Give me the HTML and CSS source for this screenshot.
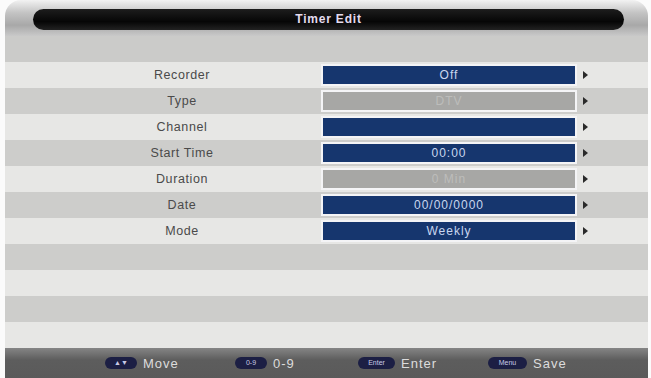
FILE: index.html
```html
<!DOCTYPE html>
<html>
<head>
<meta charset="utf-8">
<link rel="stylesheet" href="styles.css">
</head>
<body>
<div class="screen">
  <div class="topbar"><div class="pill-title">Timer Edit</div></div>
  <div class="stripe head"></div>
  <div class="row light"><div class="label">Recorder</div><div class="val blue">Off</div><div class="arrow"></div></div>
  <div class="row dark"><div class="label">Type</div><div class="val grey">DTV</div><div class="arrow"></div></div>
  <div class="row light"><div class="label">Channel</div><div class="val blue"></div><div class="arrow"></div></div>
  <div class="row dark"><div class="label">Start Time</div><div class="val blue">00:00</div><div class="arrow"></div></div>
  <div class="row light"><div class="label">Duration</div><div class="val grey">0 Min</div><div class="arrow"></div></div>
  <div class="row dark"><div class="label">Date</div><div class="val blue">00/00/0000</div><div class="arrow"></div></div>
  <div class="row light"><div class="label">Mode</div><div class="val blue">Weekly</div><div class="arrow"></div></div>
  <div class="stripe dark"></div>
  <div class="stripe light"></div>
  <div class="stripe dark"></div>
  <div class="stripe light"></div>
  <div class="footer">
    <div class="hint w1"><span class="key k1">▲▼</span><span class="htext">Move</span></div>
    <div class="hint w2"><span class="key k2">0-9</span><span class="htext">0-9</span></div>
    <div class="hint w3"><span class="key k3">Enter</span><span class="htext">Enter</span></div>
    <div class="hint"><span class="key k4">Menu</span><span class="htext">Save</span></div>
  </div>
</div>
</body>
</html>
```
FILE: styles.css
```css
html, body { margin: 0; padding: 0; background: #fbfbfb; }
body { font-family: "Liberation Sans", Arial, sans-serif; width: 651px; height: 378px; overflow: hidden; }
.screen { margin-left: 5px; width: 643px; }
.topbar {
  height: 36px;
  box-sizing: border-box;
  padding: 9px 24px 6px 28px;
  border-radius: 16px 16px 0 0;
  background: linear-gradient(#f2f2f2 0%, #c4c4c4 35%, #a8a8a8 70%, #c9c9c9 100%);
}
.pill-title {
  height: 21px;
  border-radius: 11px;
  background: linear-gradient(#1d1d1d, #060606 60%, #222);
  color: #e4dcee;
  font-size: 12px;
  font-weight: bold;
  letter-spacing: 0.8px;
  text-align: center;
  line-height: 21px;
}
.stripe { height: 26px; }
.head { background: #cbcbc9; }
.dark { background: #cdcdcb; }
.light { background: #e7e7e5; }
.row { height: 26px; display: flex; align-items: center; padding-left: 50px; }
.label { width: 254px; text-align: center; font-size: 12.5px; letter-spacing: 0.6px; color: #4a4a4a; }
.val {
  margin-left: 12px;
  width: 252px;
  height: 18px;
  border: 2px solid #f4f4f6;
  line-height: 18px;
  text-align: center;
  font-size: 12px;
  letter-spacing: 1px;
}
.blue { background: #16366e; color: #c9d6ef; }
.grey { background: #a7a7a5; color: #bdbdbb; }
.arrow {
  margin-left: 6px;
  width: 0; height: 0;
  border-top: 4px solid transparent;
  border-bottom: 4px solid transparent;
  border-left: 5px solid #2a2a2a;
}
.footer {
  height: 30px;
  display: flex;
  align-items: center;
  padding-left: 100px;
  background: linear-gradient(#858585, #5d5d5d 40%, #5a5a5a);
}
.hint { display: flex; align-items: center; }
.w1 { width: 130px; }
.w2 { width: 123px; }
.w3 { width: 130px; }
.key {
  background: #1c1f44;
  color: #c8cbe6;
  font-size: 7px;
  border-radius: 6px;
  height: 12px;
  line-height: 12px;
  text-align: center;
}
.k1 { width: 32px; }
.k2 { width: 32px; }
.k3 { width: 37px; }
.k4 { width: 39px; }
.htext { margin-left: 6px; color: #dcdcdc; font-size: 13px; letter-spacing: 1px; }
```
